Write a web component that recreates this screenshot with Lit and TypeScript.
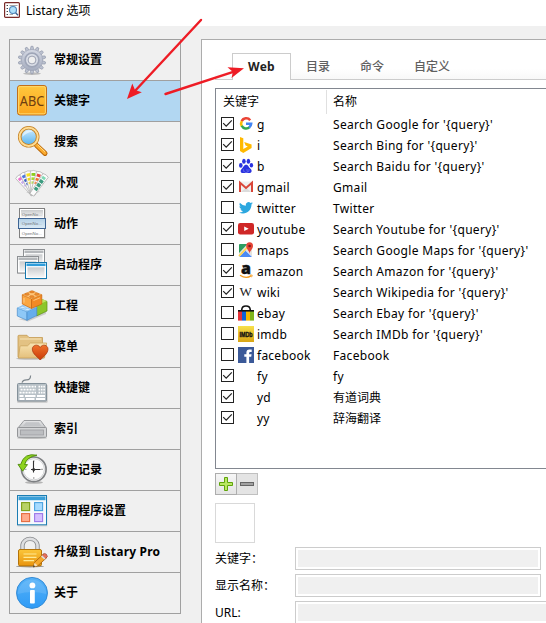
import { LitElement, html, css, svg, nothing } from "lit";
import { customElement, property } from "lit/decorators.js";

const gearTeeth = Array.from({ length: 14 }, (_, i) => i * (360 / 14));

const sideIcons: Record<string, unknown> = {
  gear: svg`
    <ellipse cx="16" cy="29.6" rx="9" ry="1.3" fill="#000" opacity=".22"/>
    ${gearTeeth.map((a) => svg`<path d="M14.2 6L15 2.3H17L17.8 6Z" fill="#bcc2d0" stroke="#8d94a7" stroke-width=".6" transform="rotate(${a} 16 16)"/>`)}
    <circle cx="16" cy="16" r="10.6" fill="url(#gGear)" stroke="#9aa1b3" stroke-width=".5"/>
    <circle cx="16" cy="16" r="6.9" fill="none" stroke="#9fa6b8" stroke-width="1.6"/>
    <circle cx="16" cy="16" r="5" fill="none" stroke="#d9dde6" stroke-width="1.8"/>
    <circle cx="16" cy="16" r="3.9" fill="#efefef" stroke="#8b92a5" stroke-width=".8"/>`,
  abc: svg`
    <rect x="1.5" y=".5" width="29" height="29.5" rx="2.5" fill="url(#gAbc)" stroke="#c06f1c"/>
    <rect x="2.6" y="1.6" width="26.8" height="27.2" rx="1.6" fill="none" stroke="#ffd86b"/>
    <text x="16" y="20.8" text-anchor="middle" textLength="24.5" lengthAdjust="spacingAndGlyphs" font-family="Noto Sans" font-size="15" fill="#6e3d10">ABC</text>`,
  search: svg`
    <path d="M20.4 19.2L29 27.4" stroke="#b9670b" stroke-width="5" stroke-linecap="round"/>
    <path d="M20.6 19.2L28.9 27.1" stroke="#fbab2e" stroke-width="3.3" stroke-linecap="round"/>
    <path d="M21.6 18.8L29 25.8" stroke="#ffe08b" stroke-width="1"/>
    <circle cx="12.7" cy="10.8" r="9" fill="url(#gLens)" stroke="#c48124" stroke-width="3.6"/>
    <circle cx="12.7" cy="10.8" r="9.1" fill="none" stroke="#ffdc93" stroke-width="2"/>
    <path d="M6.5 11A6.4 6.4 0 0 1 17 5.8Q10 6.5 6.5 11Z" fill="#fff" opacity=".55"/>`,
  palette: svg`
    <path d="M10 25L17 29L24 24Z" fill="#000" opacity=".15"/>
    ${[
      [-40, "#ef6fd0", "#c9a9f0"],
      [-26, "#4c76e0", "#3f62c4"],
      [-12, "#f6e01c", "#f0d71a"],
      [3, "#8ccc1e", "#a6d92f"],
      [19, "#e63f3f", "#f0742f"],
      [36, "#7fd9b4", "#3c9c80"],
    ].map(
      ([a, c, d]) => svg`<g transform="rotate(${a} 16.5 26.5)">
        <path d="M13.2 4.2Q16.5 2.6 19.8 4.2L19 28H14.4Z" fill="#fbfbfb" stroke="#b0b0b0" stroke-width=".7"/>
        <rect x="14.5" y="6" width="3.8" height="2.9" fill="${c}"/>
        <rect x="14.7" y="10.4" width="3.4" height="2.6" fill="${d}"/>
        <rect x="14.9" y="14.4" width="3" height="2.4" fill="${d}" opacity=".8"/></g>`
    )}
    <g transform="rotate(36 16.5 26.5)" fill="#3c9c80"><rect x="14.7" y="10" width="3.8" height="3.2"/><rect x="14.7" y="14.6" width="3.8" height="3.2"/><rect x="14.9" y="19" width="3.6" height="3.2"/></g>`,
  action: svg`
    <rect x="3.5" y="1" width="26" height="30" fill="#000" opacity=".15"/>
    <rect x="3.5" y=".5" width="25" height="29" fill="#fff" stroke="#808080"/>
    <rect x="5" y="2" width="22" height="7.5" fill="url(#gGray)"/>
    <rect x="2.5" y="10.5" width="27" height="10" fill="url(#gSel)" stroke="#3d6494"/>
    ${[7.6, 17.4, 26.6].map((y) => svg`<text x="5.8" y="${y}" textLength="20" lengthAdjust="spacingAndGlyphs" font-family="Liberation Sans" font-size="4.4" fill="#707478">OpenNo...</text>`)}`,
  windows: svg`
    ${[
      [7.5, 0.5, 21, 16, "#8d9093", "#b4b7ba"],
      [1.5, 7.5, 21, 16.5, "#8d9093", "#b4b7ba"],
      [9.5, 13.5, 21, 16, "#1477ae", "#2f9ddb"],
    ].map(
      ([x, y, w, h, s, t]) => svg`<g transform="translate(${x} ${y})">
        <rect x="0" y="1" width="${w}" height="${h}" fill="#000" opacity=".14"/>
        <rect width="${w}" height="${h}" fill="#fff" stroke="${s}"/>
        <rect x="1" y="1" width="19" height="2.6" fill="${t}"/>
        <rect x="2" y="4.8" width="17" height="10" fill="url(#gGray)"/></g>`
    )}`,
  bricks: svg`
    <path d="M2 29L12 31.5L30 24V21L12 28Z" fill="#000" opacity=".15"/>
    <path d="M20.5 13L26 9.5L31 11.5V21L20.5 26Z" fill="#8cc62b" stroke="#5b9012" stroke-width=".7"/>
    <path d="M20.5 12L26 9L31 11L21.5 15Z" fill="#bfe45e"/>
    <path d="M1.3 18L11 21.6V30.3L1.3 26Z" fill="#8ec8f7" stroke="#4a8cc9" stroke-width=".7"/>
    <path d="M11 21.6L20.8 17V25.5L11 30.3Z" fill="#66adec" stroke="#4a8cc9" stroke-width=".7"/>
    <path d="M1.3 18L11 13.5L20.8 17L11 21.6Z" fill="#b5dcfb" stroke="#6daee6" stroke-width=".6"/>
    <ellipse cx="6.6" cy="17.4" rx="2.4" ry="1.1" fill="#d5ecff" stroke="#6daee6" stroke-width=".5"/>
    <ellipse cx="11.5" cy="19.4" rx="2.4" ry="1.1" fill="#d5ecff" stroke="#6daee6" stroke-width=".5"/>
    <path d="M6.3 4.8L15.5 8.9V18.5L6.3 14Z" fill="#fba640" stroke="#c8660f" stroke-width=".7"/>
    <path d="M15.5 8.9L25.8 4.8V14L15.5 18.5Z" fill="#f28a24" stroke="#c8660f" stroke-width=".7"/>
    <path d="M6.3 4.8L16 .8L25.8 4.8L15.5 8.9Z" fill="#ffc578" stroke="#dc7d1f" stroke-width=".6"/>
    <g fill="#ee8a2c" stroke="#c4691a" stroke-width=".4"><ellipse cx="16" cy="1.9" rx="2.4" ry="1"/><ellipse cx="11" cy="4.3" rx="2.4" ry="1.1"/><ellipse cx="20.8" cy="4.3" rx="2.4" ry="1.1"/><ellipse cx="15.8" cy="6.7" rx="2.4" ry="1.1"/></g>
    <path d="M8 8V12.6M17.5 10.5L24 7.8" stroke="#ffd79b" stroke-width=".8"/>`,
  folder: svg`
    <ellipse cx="14" cy="27.6" rx="14" ry="1.2" fill="#000" opacity=".22"/>
    <path d="M2 26V5Q2 4.3 3 4.3H11L13 6.5H26.5V26Z" fill="#e3c283" stroke="#c49a52" stroke-width=".8"/>
    <path d="M4 8H25" stroke="#f7e4b8"/>
    <path d="M2.3 27L4 15.5Q4.2 14.8 5 14.8H11.5L14.5 12H30.6L28.5 27Z" fill="url(#gFold)" stroke="#cba35c" stroke-width=".8"/>
    <path d="M24.2 29C22 26.3 16.3 23 16.3 18C16.3 14.2 21.8 12.4 24.2 16.5C26.6 12.4 32 14.2 32 18C32 23 26.4 26.3 24.2 29Z" fill="url(#gHeart)" stroke="#a63008" stroke-width=".7"/>`,
  keyboard: svg`
    <path d="M6 10.6Q7 7.7 10.5 7.8Q14.5 8 14.6 3.5" fill="none" stroke="#7c858b" stroke-width="1.2"/>
    <rect x="1" y="12.8" width="30.6" height="18" rx="1" fill="#000" opacity=".18"/>
    <rect x="1.5" y="11.5" width="29" height="17.5" rx="1" fill="#b7c0c6" stroke="#84919a"/>
    ${[14, 17, 20].map((y, r) => svg`<path d="M${3.5 + (r % 2)} ${y + 0.6}H20" stroke="#fff" stroke-width="1.9" stroke-dasharray="2.1 .9"/><path d="M22.5 ${y + 0.6}H29" stroke="#fff" stroke-width="1.9" stroke-dasharray="1.6 .8"/>`)}
    <path d="M3.5 24H7.5M9 24H19.5M21 24H29M3.5 27H8.5M10 27H18.5M20 27H29" stroke="#fff" stroke-width="1.8"/>`,
  drive: svg`
    <ellipse cx="16" cy="25" rx="15" ry="1.1" fill="#000" opacity=".2"/>
    <path d="M8 7.5H24.5L30.5 15.5H1.5Z" fill="url(#gDrive)" stroke="#919396" stroke-width=".9"/>
    <path d="M10 9.2H22.8L25.5 13H7Z" fill="#c3c5c8"/>
    <rect x="1.5" y="14.5" width="29" height="9.8" rx="1" fill="#d4d5d7" stroke="#939598"/>
    <rect x="4.5" y="17" width="23" height="5" fill="#bcbec1" stroke="#9fa1a4" stroke-width=".9"/>`,
  history: svg`
    <ellipse cx="18" cy="28.4" rx="9" ry="1.4" fill="#000" opacity=".25"/>
    <circle cx="17.8" cy="15.3" r="12.3" fill="#f5f5f5" stroke="#7d7f82" stroke-width="1.7"/>
    <circle cx="17.8" cy="15.3" r="10.6" fill="#fdfdfd" stroke="#d0d2d4" stroke-width="1"/>
    <path d="M17.8 6V8M17.8 23V25M8.5 15.3H10.5M25 15.3H27" stroke="#9a9a9a"/>
    <path d="M17.5 7V18.5M15 15.5H24.5" stroke="#333" stroke-width="1.1"/>
    <circle cx="17.7" cy="15.4" r="1.5" fill="#333"/>
    <path d="M21 1.2Q8-1.6 4.7 10.4H2L6.6 17.2L11.5 10.6H8.6Q10.6 3 21 1.2Z" fill="#8ed31e" stroke="#4d8a08" stroke-width=".9"/>`,
  apps: svg`
    <rect x="1.5" y="1.4" width="29.8" height="30" fill="#000" opacity=".12"/>
    <rect x="1.5" y=".5" width="29" height="29.3" fill="#f6fafd" stroke="#1b7db3"/>
    <rect x="2.5" y="1.4" width="27" height="3.8" fill="#3a9fd8"/>
    <g stroke-width="1.1"><rect x="5.6" y="7.6" width="8" height="8" fill="#b8d267" stroke="#7f9f18"/><rect x="18.6" y="7.6" width="8" height="8" fill="#a6dbff" stroke="#4ba3e0"/><rect x="5.6" y="18.6" width="8" height="8" fill="#ffab8c" stroke="#e56b3e"/><rect x="18.6" y="18.6" width="8" height="8" fill="#d5bfff" stroke="#9c78e8"/></g>`,
  lock: svg`
    <ellipse cx="14" cy="30.4" rx="14" ry="1" fill="#000" opacity=".35"/>
    <path d="M6.5 14V9A7.6 7.3 0 0 1 21.5 9V14" fill="none" stroke="#8b8d90" stroke-width="4.4"/>
    <path d="M6.5 14V9A7.6 7.3 0 0 1 21.5 9V14" fill="none" stroke="#dedfe1" stroke-width="2.6"/>
    <rect x="2.5" y="13.5" width="23" height="16.4" rx="1.5" fill="url(#gLock)" stroke="#b37309"/>
    <path d="M7.5 18H20.5M7.5 21.3H20.5M7.5 24.6H18" stroke="#ffe994" stroke-width="1.2"/>
    <path d="M17.3 31L18.6 26.3L27.5 18L31 21.4L22 29.6Z" fill="#f4a82c" stroke="#a45e0a" stroke-width=".8"/>
    <path d="M26 19.4L28.3 17.5Q30.5 17 31.5 20.5L29.2 22.7Z" fill="#e5705c" stroke="#994030" stroke-width=".6"/>
    <path d="M25 20.4L26.2 19.3L29.5 22.5L28.3 23.6Z" fill="#ddd"/>
    <path d="M17.3 31L18.6 26.8L21.6 29.6Z" fill="#f8deb0"/><path d="M17 31.3L17.7 29L19.2 30.5Z" fill="#333"/>`,
  info: svg`
    <circle cx="16" cy="15.9" r="15.5" fill="url(#gInfo)" stroke="#2c86d2" stroke-width=".9"/>
    <path d="M1.8 17A14.2 14.2 0 0 1 30.2 17Q16 13 1.8 17Z" fill="#fff" opacity=".12"/>
    <circle cx="16.4" cy="8.4" r="2.9" fill="#fff"/>
    <rect x="14" y="12.9" width="4.8" height="13.6" rx=".8" fill="#fff"/>`,
};

const siteIcons: Record<string, unknown> = {
  google: svg`<g fill="none" stroke-width="2.5"><path d="M12.2 4.2A5 5 0 0 0 3.7 5.2" stroke="#ea4335"/><path d="M3.8 5A5 5 0 0 0 3.8 10" stroke="#fbbc05"/><path d="M3.7 9.7A5 5 0 0 0 11.6 11.2" stroke="#34a853"/><path d="M8 7.7H13.2A5 5 0 0 1 11.2 11.4" stroke="#4285f4"/></g>`,
  bing: svg`<path d="M2 0L5.3 1.2V12L9.8 9.4L7.6 8.4L6.2 5L13.6 7.6V11L5.3 16L2 14Z" fill="#ffb900"/>`,
  baidu: svg`<g fill="#2a32e0"><ellipse cx="2.8" cy="7.4" rx="1.8" ry="2.3"/><ellipse cx="5.9" cy="3.2" rx="1.8" ry="2.5"/><ellipse cx="10.4" cy="3.2" rx="1.8" ry="2.5"/><ellipse cx="13.4" cy="7.2" rx="1.7" ry="2.3"/><path d="M8.1 6.8C10.5 6.8 10.4 9.2 12.5 10.8C14.8 12.9 13.3 15.3 11 15.1C9.4 14.9 9 14.7 8.1 14.7C6.8 14.7 6.4 15.1 5 15.1C2.6 15.2 1.9 12.6 3.6 11C5.7 9.2 5.8 6.8 8.1 6.8Z"/></g><path d="M5.4 11.2V13.3H7.2M9 11V13.3H11V11" fill="none" stroke="#7d84f0" stroke-width=".6"/>`,
  gmail: svg`<rect x="1" y="2.6" width="14" height="10.4" rx=".8" fill="#efefef"/><path d="M3 13L8 8.5L13 13Z" fill="#dcdcdc"/><path d="M2 13V3.8L8 9L14 3.8V13" fill="none" stroke="#d9473a" stroke-width="2"/>`,
  twitter: svg`<path d="M15 3.5Q14.3 4 13.5 4.3C13.6 10 9.2 13.6 5 13.5Q2.8 13.5 1.2 12.4Q3.6 12.4 5 11.2Q3 10.8 2.4 9.2H3.6Q1.4 8.4 1.4 6.2L2.7 6.5Q.7 5 1.8 2.7Q4.5 5.7 7.8 5.7Q7.3 3.4 9.2 2.4Q11 1.6 12.6 3L14.5 2.2Q14.2 3.2 13.4 3.8Z" fill="#2ca7df"/>`,
  youtube: svg`<rect x="0" y="2" width="16" height="11.5" rx="2.2" fill="#cf2727"/><path d="M6.2 5.4V10L10.7 7.7Z" fill="#fff"/>`,
  maps: svg`<rect x="1" y="2" width="13" height="13" rx="1" fill="#e6e3dc"/><path d="M1 3Q1 2 2 2H9.5L1 11Z" fill="#2d9d60"/><path d="M1.6 14.7L8 8.3L14 14.2V15H2Z" fill="#4b8af4"/><path d="M1 14L11 3.5" stroke="#ffd34d" stroke-width="1.8"/><path d="M8 8.6L14 14.5" stroke="#fff" stroke-width="1"/><path d="M11.6 11.8C11.3 8.4 8.2 7 8.2 4A3.4 3.7 0 0 1 15 4C15 7 11.9 8.4 11.6 11.8Z" fill="#e54335"/><circle cx="11.6" cy="4" r="1.3" fill="#7c1b1b"/>`,
  amazon: svg`<text x="8" y="10.6" text-anchor="middle" font-family="Noto Sans" font-weight="900" font-size="16" stroke="#111" stroke-width=".4" fill="#111">a</text><path d="M2 12.2Q8 16.2 13 12.9" fill="none" stroke="#f49a1c" stroke-width="1.3"/><path d="M12 12.1H14.2L13.6 14.2" fill="none" stroke="#f49a1c" stroke-width=".9"/>`,
  wiki: svg`<text x="7.8" y="12" text-anchor="middle" textLength="12.4" lengthAdjust="spacingAndGlyphs" font-family="Liberation Serif" font-size="13" fill="#222">W</text>`,
  ebay: svg`<path d="M3.8 6V4.5Q4 1 8 1Q12 1 12.2 4.5V6" fill="none" stroke="#111" stroke-width="1.6"/><rect x="0" y="5" width="16" height="2" fill="#111"/><rect x="0" y="6.6" width="4" height="9" fill="#e53238"/><rect x="4" y="6.6" width="4" height="9" fill="#0f62d6"/><rect x="8" y="6.6" width="4" height="9" fill="#f5b800"/><rect x="12" y="6.6" width="4" height="9" fill="#7fb51a"/>`,
  imdb: svg`<rect width="16" height="16" fill="url(#gImdb)"/><text x="8" y="10.6" text-anchor="middle" textLength="13.2" lengthAdjust="spacingAndGlyphs" font-family="Liberation Sans" font-weight="bold" font-size="6.6" stroke="#111" stroke-width=".35" fill="#111">IMDb</text>`,
  facebook: svg`<rect width="16" height="16" fill="#3b5998"/><path d="M8.4 16V9.8H6.3V7.3H8.4V5.5Q8.4 2.6 11.4 2.6H13.7V5.1H12.2Q11.1 5.1 11.1 6.2V7.3H13.6L13.2 9.8H11.1V16Z" fill="#fff"/>`,
};

const sections: [string, string][] = [
  ["gear", "常规设置"],
  ["abc", "关键字"],
  ["search", "搜索"],
  ["palette", "外观"],
  ["action", "动作"],
  ["windows", "启动程序"],
  ["bricks", "工程"],
  ["folder", "菜单"],
  ["keyboard", "快捷键"],
  ["drive", "索引"],
  ["history", "历史记录"],
  ["apps", "应用程序设置"],
  ["lock", "升级到 Listary Pro"],
  ["info", "关于"],
];

const keywords: [boolean, string, string, string][] = [
  [true, "google", "g", "Search Google for '{query}'"],
  [true, "bing", "i", "Search Bing for '{query}'"],
  [true, "baidu", "b", "Search Baidu for '{query}'"],
  [true, "gmail", "gmail", "Gmail"],
  [false, "twitter", "twitter", "Twitter"],
  [true, "youtube", "youtube", "Search Youtube for '{query}'"],
  [false, "maps", "maps", "Search Google Maps for '{query}'"],
  [true, "amazon", "amazon", "Search Amazon for '{query}'"],
  [true, "wiki", "wiki", "Search Wikipedia for '{query}'"],
  [false, "ebay", "ebay", "Search Ebay for '{query}'"],
  [false, "imdb", "imdb", "Search IMDb for '{query}'"],
  [false, "facebook", "facebook", "Facebook"],
  [true, "", "fy", "fy"],
  [true, "", "yd", "有道词典"],
  [true, "", "yy", "辞海翻译"],
];

const hasHan = (s: string) => /[\u4e00-\u9fff]/.test(s);

const stops = (a: string, b: string) => svg`<stop offset="0" stop-color="${a}"/><stop offset="1" stop-color="${b}"/>`;
const gradients: [string, string, string][] = [
  ["gGear", "#d4d8e3", "#a5acbe"],
  ["gAbc", "#ffc73d", "#fba51d"],
  ["gLens", "#d6efff", "#4fb0ee"],
  ["gGray", "#c9cbcd", "#f6f6f6"],
  ["gSel", "#b3d0e6", "#dcebf5"],
  ["gFold", "#f8e3b1", "#e4c07c"],
  ["gHeart", "#f0722b", "#c93a08"],
  ["gDrive", "#e5e6e7", "#c4c6c8"],
  ["gLock", "#fbc63a", "#e8940f"],
  ["gInfo", "#55b1f7", "#2f9bf6"],
  ["gImdb", "#f7e04a", "#d9a514"],
];

@customElement("ui-icon")
export class UiIcon extends LitElement {
  @property() name = "";
  @property({ type: Number }) size = 32;

  static styles = css`
    :host { display: block; flex: none; line-height: 0; font-weight: normal; letter-spacing: 0; }
    svg { display: block; overflow: visible; }
  `;

  render() {
    const art = this.size === 32 ? sideIcons[this.name] : siteIcons[this.name];
    return html`<svg width=${this.size} height=${this.size} viewBox="0 0 ${this.size} ${this.size}">
      <defs>${gradients.map(([id, a, b]) => svg`<linearGradient id="${id}" x1="0" y1="0" x2="0" y2="1">${stops(a, b)}</linearGradient>`)}</defs>
      ${art ?? nothing}
    </svg>`;
  }
}

@customElement("app-root")
export class AppRoot extends LitElement {
  static styles = css`
    :host {
      display: flex; flex-direction: column; position: relative;
      width: 546px; height: 623px; overflow: hidden; box-sizing: border-box;
      background: #f0f0f0; color: #000;
      font: 12px/16px "Noto Sans", "Noto Sans CJK SC", sans-serif;
    }
    * { box-sizing: border-box; }
    .title { height: 26px; flex: none; background: #fff; display: flex; align-items: flex-start; gap: 6px; padding: 2px 0 0 4px; }
    .title svg { display: block; }
    .title span { line-height: 18px; }
    .body { flex: 1; min-height: 0; display: flex; align-items: flex-start; gap: 20px; padding: 13px 0 0 9px; }
    .side { width: 172px; flex: none; border: 1px solid #a0a0a0; }
    .item { height: 41px; display: flex; align-items: center; gap: 6px; padding-left: 6px; border-bottom: 1px solid #a0a0a0; font-weight: bold; }
    .item:last-child { border-bottom: 0; height: 40px; }
    .item.on { background: #b2d7f2; }
    .item.latin { letter-spacing: .2px; }
    .panel { flex: none; width: 360px; height: 600px; background: #fff; border: 1px solid #acacac; padding: 13px 0 0 13px; }
    .tabs { display: flex; height: 27px; padding-left: 17px; border-bottom: 1px solid #ccc; background: linear-gradient(#fff 60%, #f8f8f8); color: #606060; }
    .tab { width: 54px; text-align: center; line-height: 27px; font-weight: 500; }
    .tab.on { width: 59px; height: 27px; background: #fff; border: 1px solid #ccc; border-bottom: 0; color: #222; font-weight: bold; line-height: 25px; letter-spacing: .3px; }
    .tab.wide { width: 66px; }
    .list { margin-top: 8px; height: 381px; border: 1px solid #828790; }
    .head { display: flex; height: 25px; line-height: 25px; padding-left: 7px; }
    .head div:first-child { width: 104px; border-right: 1px solid #e0e0e0; margin-top: 1px; height: 24px; line-height: 24px; }
    .head div:last-child { padding-left: 6px; }
    .row { display: flex; height: 21px; align-items: center; padding-left: 5px; line-height: 21px; }
    .box { width: 13px; height: 13px; border: 1px solid #222; flex: none; margin-right: 4px; margin-top: -2px; }
    .box svg { display: block; }
    .row ui-icon { margin-bottom: 1px; }
    .key { width: 79px; flex: none; padding-left: 3px; letter-spacing: .25px; }
    .name { white-space: pre; letter-spacing: .32px; }
    .name.han { letter-spacing: 0; }
    .btns { display: flex; margin-top: 4px; }
    .btn { width: 22px; height: 22px; border: 1px solid #adadad; background: linear-gradient(#f6f6f6, #e4e4e4); }
    .btn + .btn { width: 21px; border-left: 0; background: #e4e4e4; border-color: #c0c0c0; }
    .btn svg { display: block; }
    .thumb { width: 40px; height: 40px; border: 1px solid #d9d9d9; margin: 8px 0 4px; }
    .field { display: flex; height: 23px; margin-bottom: 4px; line-height: 23px; }
    .field span { width: 80px; flex: none; }
    .input { width: 246px; flex: none; border: 1px solid #ccc; background: #f0f0f0; box-shadow: inset 0 0 0 2px #fff; }
    .input.long { width: 280px; }
    .arrows { position: absolute; left: 0; top: 0; }
  `;

  render() {
    return html`
      <div class="title">
        <svg width="16" height="16" viewBox="0 0 16 16">
          <rect x=".6" y=".6" width="14.8" height="14.8" rx="1" fill="#fff" stroke="#7a2a28" stroke-width="1.2"/>
          <path d="M2.6 3.5H4M2.6 6.5H4M2.6 9.5H4M2.6 12.5H4" stroke="#444" stroke-width="1.2"/>
          <path d="M5.5 3.5H13.5M5.5 12.5H9" stroke="#a8a8a8" stroke-width="1.1"/>
          <path d="M11.6 10.8L14 13.2" stroke="#3f628f" stroke-width="1.5"/>
          <circle cx="9" cy="8" r="3.5" fill="#aee0fa" stroke="#4d83b8" stroke-width="1.1"/>
        </svg>
        <span>Listary 选项</span>
      </div>
      <div class="body">
        <div class="side">
          ${sections.map(([icon, label]) => html`<div class="item ${icon === "abc" ? "on" : icon === "lock" ? "latin" : ""}"><ui-icon name=${icon}></ui-icon><span>${label}</span></div>`)}
        </div>
        <div class="panel">
          <div class="tabs">
            <div class="tab on">Web</div><div class="tab">目录</div><div class="tab">命令</div><div class="tab wide">自定义</div>
          </div>
          <div class="list">
            <div class="head"><div>关键字</div><div>名称</div></div>
            ${keywords.map(([on, icon, key, name]) => html`<div class="row">
              <div class="box">${on ? html`<svg width="11" height="11" viewBox="0 0 11 11"><path d="M1.2 5.2L4.2 8.2L9.8 2.4" fill="none" stroke="#222" stroke-width="1.2"/></svg>` : nothing}</div>
              <ui-icon name=${icon} .size=${16}></ui-icon>
              <span class="key">${key}</span><span class="name ${hasHan(name) ? "han" : ""}">${name}</span>
            </div>`)}
          </div>
          <div class="btns">
            <div class="btn"><svg width="20" height="20" viewBox="0 0 20 20"><path d="M8.5 3.5H11.5V8.5H16.5V11.5H11.5V16.5H8.5V11.5H3.5V8.5H8.5Z" fill="#b9e763" stroke="#5fa40b"/></svg></div>
            <div class="btn"><svg width="20" height="20" viewBox="0 0 20 20"><rect x="3.5" y="8.5" width="13" height="3" fill="#a2a2a2" stroke="#666"/></svg></div>
          </div>
          <div class="thumb"></div>
          <div class="field"><span>关键字：</span><div class="input"></div></div>
          <div class="field"><span>显示名称：</span><div class="input"></div></div>
          <div class="field"><span>URL:</span><div class="input long"></div></div>
        </div>
      </div>
      <svg class="arrows" width="260" height="110" viewBox="0 0 260 110">
        <g fill="#ee1c25" stroke="#ee1c25" stroke-linecap="round">
          <path d="M201 20L134 92" stroke-width="2.4"/>
          <path d="M127 99L132.3 83.5L135 90L141.8 92.3Z" stroke="none"/>
          <path d="M165.5 94L234 71.6" stroke-width="2.4"/>
          <path d="M244 68.3L231.5 78L233 72L227.5 67.3Z" stroke="none"/>
        </g>
      </svg>
    `;
  }
}
